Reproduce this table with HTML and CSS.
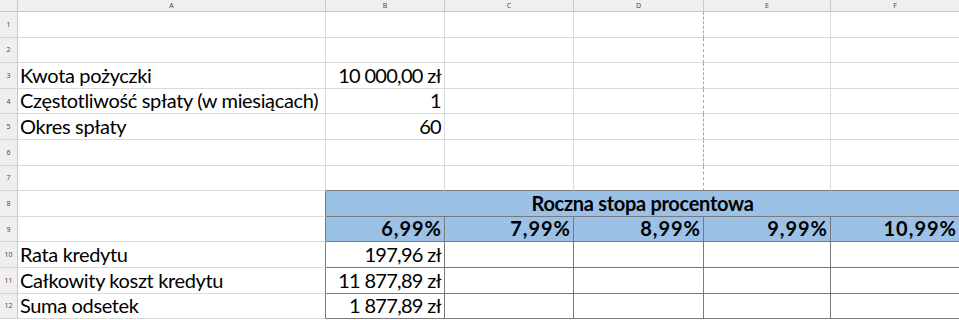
FILE: index.html
```html
<!DOCTYPE html>
<html lang="pl">
<head>
<meta charset="utf-8">
<title>Arkusz</title>
<link rel="stylesheet" href="styles.css">
</head>
<body>
<div class="sheet">
  <div class="corner"></div>
  <div class="colhdr">A</div>
  <div class="colhdr">B</div>
  <div class="colhdr">C</div>
  <div class="colhdr pb">D</div>
  <div class="colhdr">E</div>
  <div class="colhdr last">F</div>

  <div class="rowhdr">1</div>
  <div class="cell"></div><div class="cell"></div><div class="cell"></div><div class="cell brk"></div><div class="cell"></div><div class="cell last"></div>

  <div class="rowhdr">2</div>
  <div class="cell"></div><div class="cell"></div><div class="cell"></div><div class="cell brk"></div><div class="cell"></div><div class="cell last"></div>

  <div class="rowhdr">3</div>
  <div class="cell">Kwota pożyczki</div><div class="cell num">10 000,00 zł</div><div class="cell"></div><div class="cell brk"></div><div class="cell"></div><div class="cell last"></div>

  <div class="rowhdr">4</div>
  <div class="cell">Częstotliwość spłaty (w miesiącach)</div><div class="cell num">1</div><div class="cell"></div><div class="cell brk"></div><div class="cell"></div><div class="cell last"></div>

  <div class="rowhdr">5</div>
  <div class="cell">Okres spłaty</div><div class="cell num">60</div><div class="cell"></div><div class="cell brk"></div><div class="cell"></div><div class="cell last"></div>

  <div class="rowhdr">6</div>
  <div class="cell"></div><div class="cell"></div><div class="cell"></div><div class="cell brk"></div><div class="cell"></div><div class="cell last"></div>

  <div class="rowhdr">7</div>
  <div class="cell"></div><div class="cell above"></div><div class="cell above"></div><div class="cell brk above"></div><div class="cell above"></div><div class="cell last above"></div>

  <div class="rowhdr">8</div>
  <div class="cell edge"></div><div class="cell tbl head merged">Roczna stopa procentowa</div>

  <div class="rowhdr">9</div>
  <div class="cell edge"></div><div class="cell tbl head pct num">6,99%</div><div class="cell tbl head pct num">7,99%</div><div class="cell tbl head pct num">8,99%</div><div class="cell tbl head pct num">9,99%</div><div class="cell tbl head pct num last">10,99%</div>

  <div class="rowhdr">10</div>
  <div class="cell edge">Rata kredytu</div><div class="cell tbl num">197,96 zł</div><div class="cell tbl"></div><div class="cell tbl"></div><div class="cell tbl"></div><div class="cell tbl last"></div>

  <div class="rowhdr">11</div>
  <div class="cell edge">Całkowity koszt kredytu</div><div class="cell tbl num">11 877,89 zł</div><div class="cell tbl"></div><div class="cell tbl"></div><div class="cell tbl"></div><div class="cell tbl last"></div>

  <div class="rowhdr">12</div>
  <div class="cell edge">Suma odsetek</div><div class="cell tbl num">1 877,89 zł</div><div class="cell tbl"></div><div class="cell tbl"></div><div class="cell tbl"></div><div class="cell tbl last"></div>
</div>
</body>
</html>
```
FILE: styles.css
```css
html, body {
  margin: 0;
  padding: 0;
  background: #ffffff;
  overflow: hidden;
}

.sheet {
  width: 959px;
  display: grid;
  grid-template-columns: 18px 308px 119px 129px 130px 127px 128px;
  grid-template-rows: 12px repeat(12, 25.6px);
  font-family: Lato, "Noto Sans", sans-serif;
  color: #000;
}

.sheet > div {
  box-sizing: border-box;
  overflow: hidden;
  white-space: nowrap;
}

.corner,
.colhdr,
.rowhdr {
  background: #efefef;
  color: #4a4a4a;
  font-family: "Noto Sans", sans-serif;
  font-size: 7px;
  display: flex;
  align-items: center;
  justify-content: center;
  border-right: 1px solid #c8c8c8;
  border-bottom: 1px solid #c8c8c8;
}

.colhdr.last {
  border-right: none;
}

.rowhdr {
  border-bottom-color: #d4d4d4;
}

.cell {
  font-size: 20px;
  line-height: 22px;
  letter-spacing: -0.35px;
  display: flex;
  align-items: flex-end;
  padding: 0 2px 2px 2px;
  border-right: 1px solid #dadada;
  border-bottom: 1px solid #dadada;
}

.cell.last {
  border-right: none;
}

.cell.num {
  justify-content: flex-end;
  padding-right: 3px;
  letter-spacing: -0.7px;
}

.cell.brk {
  border-right: 1px dashed #a8a8a8;
}

.cell.above {
  border-bottom-color: #7a7a7a;
}

.cell.edge {
  border-right-color: #7a7a7a;
}

.cell.tbl {
  border-right-color: #7a7a7a;
  border-bottom-color: #7a7a7a;
}

.cell.tbl.last {
  border-right: none;
}

.cell.head {
  background: #9bc2e6;
  font-weight: 700;
  letter-spacing: -0.3px;
}

.cell.pct {
  letter-spacing: 1px;
  padding-right: 2px;
}

.cell.merged {
  grid-column: span 5;
  justify-content: center;
  border-right: none;
}
```
